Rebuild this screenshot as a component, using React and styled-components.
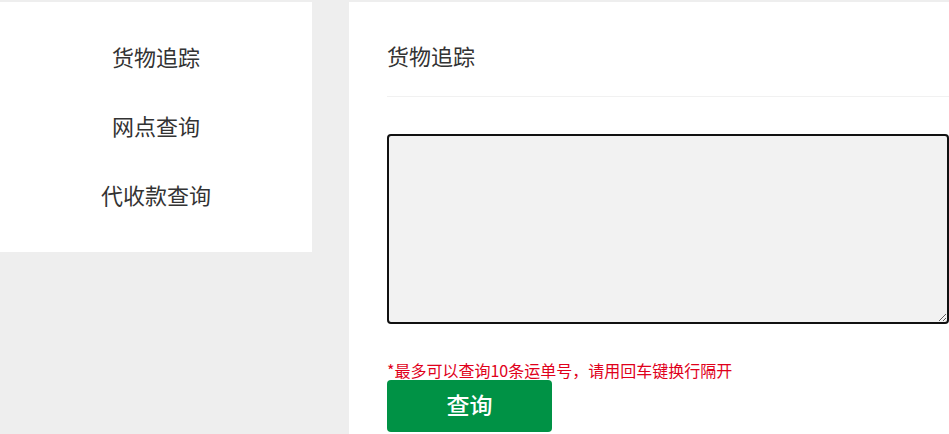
import React from 'react'
import styled, { createGlobalStyle } from 'styled-components'

const GlobalStyle = createGlobalStyle`
  html, body {
    margin: 0;
    padding: 0;
    background: #eeeeee;
    font-family: "Noto Sans CJK SC", "Noto Sans", sans-serif;
  }
`

const Page = styled.div`
  display: flex;
  align-items: flex-start;
  gap: 37px;
  padding-top: 2px;
  width: 949px;
  height: 434px;
  box-sizing: border-box;
  overflow: hidden;
`

const SideNav = styled.ul`
  width: 312px;
  flex-shrink: 0;
  margin: 0;
  padding: 20px 0 23px;
  list-style: none;
  background: #fff;
`

const NavItem = styled.li`
  height: 69px;
  line-height: 69px;
  text-align: center;
  font-size: 22px;
  color: #333;
`

const Content = styled.main`
  flex: 1;
  align-self: stretch;
  background: #fff;
  padding-left: 38px;
`

const Header = styled.div`
  height: 95px;
  box-sizing: border-box;
  padding-top: 12px;
  display: flex;
  align-items: center;
  border-bottom: 1px solid #f1f1f1;
  font-size: 22px;
  color: #333;
`

const Form = styled.form`
  display: flex;
  flex-direction: column;
  align-items: flex-start;
  padding-top: 37px;
`

const Numbers = styled.textarea`
  width: 562px;
  height: 190px;
  box-sizing: border-box;
  border: 2px solid #111;
  border-radius: 4px;
  background: #f2f2f2;
  resize: vertical;
  outline: none;
  font: inherit;
`

const Hint = styled.p`
  margin: 36px 0 0;
  font-size: 16px;
  line-height: 20px;
  color: #e0001b;
`

const SearchButton = styled.button`
  width: 165px;
  height: 52px;
  padding: 0 0 4px;
  border: 0;
  border-radius: 4px;
  background: #009245;
  color: #fff;
  font-family: inherit;
  font-size: 23px;
  font-weight: 500;
  cursor: pointer;
`

export default function App() {
  return (
    <>
      <GlobalStyle />
      <Page>
        <SideNav>
          <NavItem>货物追踪</NavItem>
          <NavItem>网点查询</NavItem>
          <NavItem>代收款查询</NavItem>
        </SideNav>
        <Content>
          <Header>货物追踪</Header>
          <Form onSubmit={e => e.preventDefault()}>
            <Numbers />
            <Hint>*最多可以查询10条运单号，请用回车键换行隔开</Hint>
            <SearchButton type="submit">查询</SearchButton>
          </Form>
        </Content>
      </Page>
    </>
  )
}
